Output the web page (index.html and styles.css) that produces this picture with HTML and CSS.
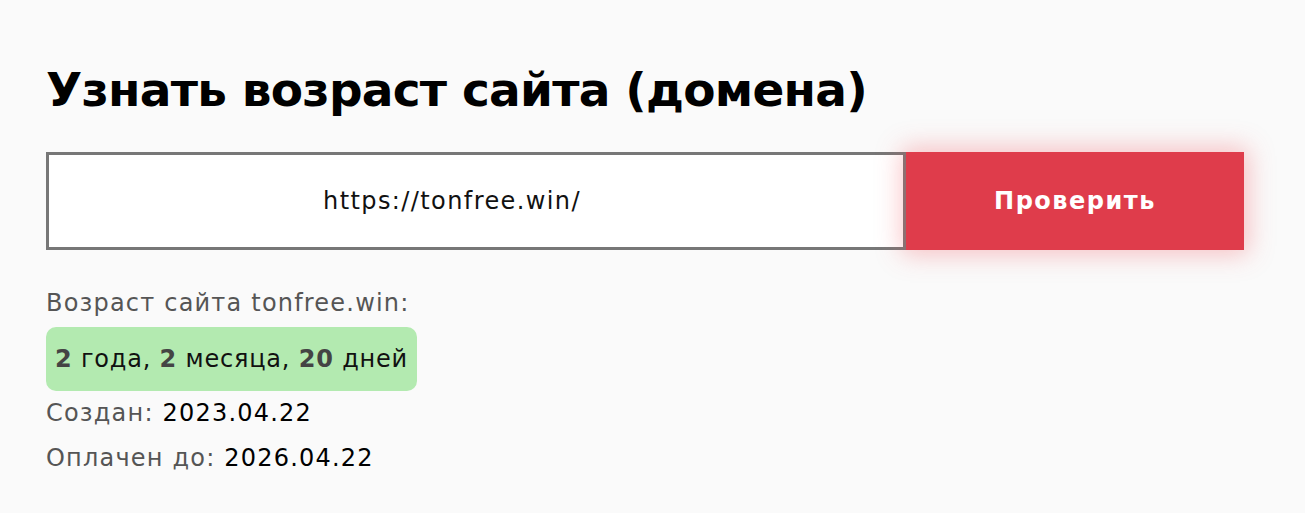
FILE: index.html
```html
<!DOCTYPE html>
<html lang="ru">
<head>
<meta charset="utf-8">
<title>Узнать возраст сайта</title>
<link rel="stylesheet" href="styles.css">
</head>
<body>
<main class="page">
  <h1 class="title">Узнать возраст сайта (домена)</h1>
  <form class="check-form">
    <div class="url-input">https://tonfree.win/</div>
    <button type="button" class="check-btn">Проверить</button>
  </form>
  <div class="result">
    <div class="result-label">Возраст сайта tonfree.win:</div>
    <div class="age-badge"><b>2</b> года, <b>2</b> месяца, <b>20</b> дней</div>
    <div class="result-row"><span class="muted">Создан:</span> 2023.04.22</div>
    <div class="result-row"><span class="muted">Оплачен до:</span> 2026.04.22</div>
  </div>
</main>
</body>
</html>
```
FILE: styles.css
```css
html, body {
  margin: 0;
  padding: 0;
  background: #fafafa;
}
body {
  font-family: "DejaVu Sans", "Noto Sans", sans-serif;
  color: #000;
}
.page {
  padding: 58px 0 0 46px;
  width: 1198px;
}
.title {
  margin: 0 0 30px 0;
  font-size: 47px;
  font-weight: 700;
  line-height: 64px;
  letter-spacing: -0.75px;
}
.check-form {
  display: flex;
  height: 98px;
}
.url-input {
  flex: 0 0 860px;
  box-sizing: border-box;
  border: 3px solid #777;
  background: #fff;
  display: flex;
  align-items: center;
  justify-content: center;
  padding-right: 48px;
  font-size: 24px;
  letter-spacing: 1.4px;
  color: #111;
}
.check-btn {
  flex: 1;
  border: none;
  background: #df3c4b;
  color: #fff;
  font-family: inherit;
  font-size: 24px;
  font-weight: 700;
  letter-spacing: 1.5px;
  box-shadow: 0 0 24px 4px rgba(240, 80, 90, 0.35);
  padding: 0;
}
.result {
  margin-top: 38px;
  font-size: 24px;
  letter-spacing: 1.2px;
}
.result-label {
  color: #555;
  line-height: 30px;
}
.age-badge {
  display: inline-block;
  margin-top: 9px;
  background: #b3eab0;
  border-radius: 10px;
  padding: 0 9px;
  height: 64px;
  line-height: 64px;
  font-size: 24px;
  letter-spacing: 0.8px;
  color: #111;
}
.age-badge b {
  color: #444;
}
.result-row {
  line-height: 45px;
  color: #000;
}
.result-row:first-of-type {
  margin-top: 1px;
}
.muted {
  color: #555;
}
```
